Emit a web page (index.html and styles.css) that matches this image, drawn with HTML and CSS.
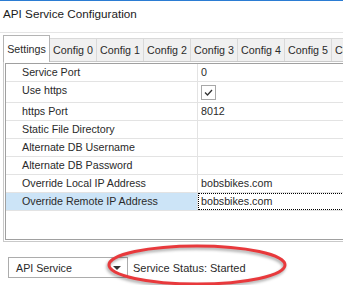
FILE: index.html
```html
<!DOCTYPE html>
<html lang="en">
<head>
  <meta charset="UTF-8" />
  <title>API Service Configuration</title>
  <link rel="stylesheet" href="styles.css">
</head>
<body>
  <div class="title">API Service Configuration</div>

  <div class="tabs">
    <div class="tab active">Settings</div>
    <div class="tab">Config 0</div>
    <div class="tab">Config 1</div>
    <div class="tab">Config 2</div>
    <div class="tab">Config 3</div>
    <div class="tab">Config 4</div>
    <div class="tab">Config 5</div>
    <div class="tab">Config 6</div>
  </div>

  <div class="panel">
    <div class="grid">
      <div class="row"><div class="name">Service Port</div><div class="value">0</div></div>
      <div class="row tall">
        <div class="name">Use https</div>
        <div class="value">
          <span class="check">
            <svg width="13" height="13" viewBox="0 0 13 13"><path d="M3 6.5 L5.5 9 L10 4" fill="none" stroke="#333" stroke-width="1.3"/></svg>
          </span>
        </div>
      </div>
      <div class="row"><div class="name">https Port</div><div class="value">8012</div></div>
      <div class="row"><div class="name">Static File Directory</div><div class="value"></div></div>
      <div class="row"><div class="name">Alternate DB Username</div><div class="value"></div></div>
      <div class="row"><div class="name">Alternate DB Password</div><div class="value"></div></div>
      <div class="row"><div class="name">Override Local IP Address</div><div class="value">bobsbikes.com</div></div>
      <div class="row selected"><div class="name">Override Remote IP Address</div><div class="value">bobsbikes.com</div></div>
    </div>
  </div>

  <div class="footer">
    <div class="combo"><span>API Service</span><span class="arrow"></span></div>
    <div class="status">Service Status: Started</div>
    <svg class="mark" width="200" height="46" viewBox="0 0 200 46">
      <ellipse cx="97" cy="23" rx="88" ry="19" fill="none" stroke="#e8393c" stroke-width="3"/>
    </svg>
  </div>
</body>
</html>
```

FILE: styles.css
```css
body {
  margin: 0;
  font-family: "Liberation Sans", Arial, sans-serif;
  font-size: 10.7px;
  color: #2a2a2a;
  background: #fff;
  overflow: hidden;
  height: 285px;
}

.title {
  border-top: 1px solid #2b7cd3;
  border-bottom: 1px solid #e5e5e5;
  height: 26px;
  padding: 5px 0 0 3px;
  font-size: 11.7px;
  line-height: 16px;
  color: #1b1b1b;
}

.tabs {
  display: flex;
  align-items: flex-end;
  margin-top: 2px;
  padding-left: 3px;
  height: 26px;
  position: relative;
  z-index: 1;
}

.tab {
  flex-shrink: 0;
  box-sizing: border-box;
  width: 48px;
  height: 23px;
  margin-right: -1px;
  border: 1px solid #d9d9d9;
  border-bottom: none;
  background: #f0f0f0;
  text-align: center;
  line-height: 22px;
  white-space: nowrap;
}

.tab.active {
  width: 47px;
  height: 27px;
  margin-bottom: -1px;
  line-height: 26px;
  background: #fff;
  border-color: #b4b4b4;
  position: relative;
  z-index: 2;
}

.panel {
  width: 420px;
  margin-left: 3px;
  padding: 1px;
  border: 1px solid #c9c9c9;
}

.grid {
  height: 175px;
  border: 1px solid #a0a0a0;
}

.row {
  display: flex;
  box-sizing: border-box;
  height: 18px;
  border-bottom: 1px solid #e3e3e3;
  line-height: 17px;
}

.row.tall {
  height: 21px;
}

.name {
  box-sizing: border-box;
  width: 192px;
  padding-left: 16px;
  border-right: 1px solid #e3e3e3;
  white-space: nowrap;
}

.value {
  flex: 1;
  padding-left: 3px;
}

.check {
  display: block;
  box-sizing: border-box;
  width: 15px;
  height: 15px;
  margin-top: 3px;
  border: 1px solid #a8a8a8;
  background: #fff;
}

.check svg {
  display: block;
}

.row.selected .name {
  background: #cce4f7;
}

.row.selected .value {
  outline: 1px dotted #000;
  outline-offset: -1px;
}

.footer {
  display: flex;
  align-items: center;
  margin-top: 15px;
  padding-left: 8px;
  position: relative;
}

.combo {
  display: flex;
  align-items: center;
  justify-content: space-between;
  box-sizing: border-box;
  width: 120px;
  height: 21px;
  padding-left: 7px;
  border: 1px solid #acacac;
}

.arrow {
  width: 0;
  height: 0;
  margin-right: 6px;
  border-left: 4px solid transparent;
  border-right: 4px solid transparent;
  border-top: 4px solid #333;
}

.status {
  margin-left: 5px;
  font-size: 11px;
}

.mark {
  position: absolute;
  left: 100px;
  top: -15px;
  filter: drop-shadow(-1px 2px 1.5px rgba(0, 0, 0, 0.35));
}
```
